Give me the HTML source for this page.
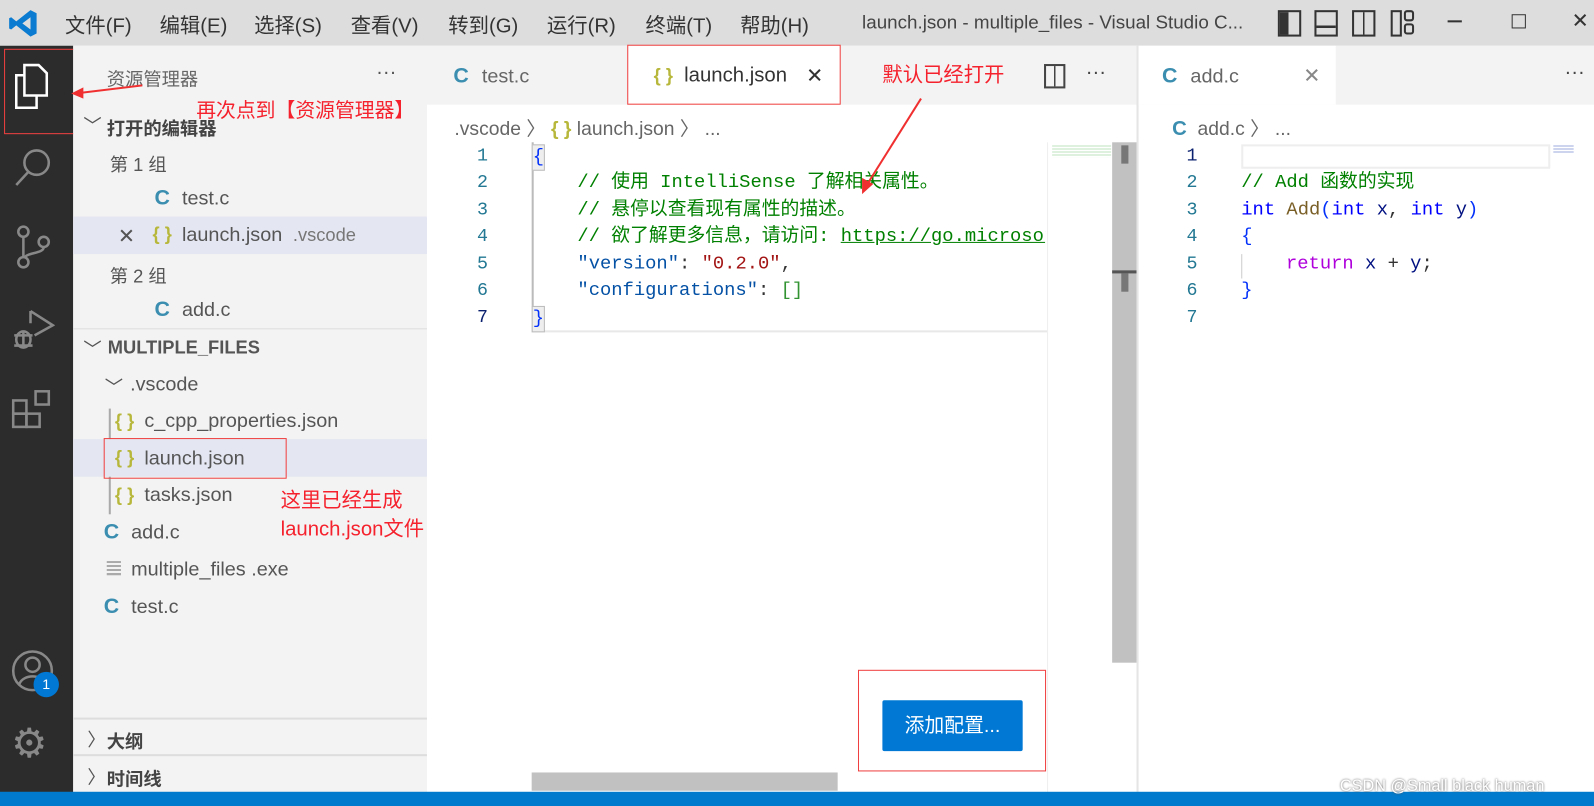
<!DOCTYPE html>
<html><head><meta charset="utf-8"><style>
html,body{margin:0;padding:0;width:1594px;height:806px;overflow:hidden;background:#fff}
#w{position:absolute;left:0;top:0;width:1568px;height:793px;transform:scale(1.01658,1.01639);transform-origin:0 0;font-family:"Liberation Sans","Noto Sans CJK SC",sans-serif;color:#333}
.a{position:absolute;white-space:nowrap}
.mono{font-family:"Liberation Mono","Noto Sans CJK SC",monospace;font-size:18.5px;line-height:24px}
.C{color:#3b8eb0;font-weight:bold}
.J{color:#b7b73b}
.red{color:#f5222d}
.box{position:absolute;border:1.5px solid #f04040}
.ln{position:absolute;width:40px;text-align:right;color:#237893;font-family:"Liberation Mono",monospace;font-size:18px;line-height:24px}
.m{position:absolute;top:9px;font-size:20px;color:#333}
</style></head><body><div id="w">
<!-- title bar -->
<div class="a" style="left:0;top:0;width:1568px;height:45px;background:#dddddd"></div>
<svg class="a" style="left:8px;top:8px" width="30" height="30" viewBox="0 0 30 30"><path d="M22 2 L28 5 V25 L22 28 L8 17 L3 21 L1 20 V10 L3 9 L8 13 Z M22 9 L14 15 L22 21 Z" fill="#0a7bd0"/></svg>
<div class="m" style="left:64px">文件(F)</div>
<div class="m" style="left:157px">编辑(E)</div>
<div class="m" style="left:250px">选择(S)</div>
<div class="m" style="left:345px">查看(V)</div>
<div class="m" style="left:441px">转到(G)</div>
<div class="m" style="left:538px">运行(R)</div>
<div class="m" style="left:635px">终端(T)</div>
<div class="m" style="left:728px">帮助(H)</div>
<div class="a" style="left:848px;top:11px;font-size:18.5px;color:#444">launch.json - multiple_files - Visual Studio C...</div>
<div class="a" style="left:1257px;top:10px;width:19px;height:22px;border:2px solid #333;background:linear-gradient(90deg,#333 45%,transparent 45%)"></div>
<div class="a" style="left:1293px;top:10px;width:19px;height:22px;border:2px solid #333;background:linear-gradient(180deg,transparent 60%,#333 60%,#333 70%,transparent 70%)"></div>
<div class="a" style="left:1330px;top:10px;width:19px;height:22px;border:2px solid #333;background:linear-gradient(90deg,transparent 45%,#333 45%,#333 55%,transparent 55%)"></div>
<div class="a" style="left:1368px;top:10px;width:7px;height:22px;border:2px solid #333"></div>
<div class="a" style="left:1381px;top:10px;width:6px;height:7px;border:2px solid #333;border-radius:3px"></div>
<div class="a" style="left:1381px;top:23px;width:6px;height:7px;border:2px solid #333;border-radius:3px"></div>
<div class="a" style="left:1424px;top:20px;width:14px;height:1.5px;background:#333"></div>
<div class="a" style="left:1487px;top:14px;width:12px;height:12px;border:1.5px solid #333"></div>
<div class="a" style="left:1546px;top:8px;font-size:20px;color:#333">✕</div>
<!-- activity bar -->
<div class="a" style="left:0;top:45px;width:72px;height:735px;background:#2c2c2c"></div>
<svg class="a" style="left:10px;top:60px" width="44" height="50" viewBox="0 0 44 50" fill="none" stroke="#fff" stroke-width="2.5"><path d="M14 4 H28 L36 12 V34 H14 Z"/><path d="M14 14 H6 V46 H26 V34"/></svg>
<svg class="a" style="left:12px;top:140px" width="44" height="50" viewBox="0 0 44 50" fill="none" stroke="#888" stroke-width="2.5"><circle cx="24" cy="20" r="12"/><path d="M16 29 L4 42"/></svg>
<svg class="a" style="left:12px;top:220px" width="44" height="50" viewBox="0 0 44 50" fill="none" stroke="#888" stroke-width="2.5"><circle cx="11" cy="8" r="5"/><circle cx="11" cy="38" r="5"/><circle cx="31" cy="18" r="5"/><path d="M11 13 V33 M31 23 C31 30 14 28 12 34"/></svg>
<svg class="a" style="left:10px;top:300px" width="44" height="50" viewBox="0 0 44 50" fill="none" stroke="#888" stroke-width="2.5"><path d="M20 6 L42 20 L24 30 M20 6 V18"/><ellipse cx="13" cy="34" rx="7" ry="8"/><path d="M4 30 H22 M4 40 H22 M13 26 V42"/></svg>
<svg class="a" style="left:10px;top:380px" width="44" height="50" viewBox="0 0 44 50" fill="none" stroke="#888" stroke-width="2.5"><rect x="3" y="14" width="13" height="13"/><rect x="3" y="27" width="13" height="13"/><rect x="16" y="27" width="13" height="13"/><rect x="25" y="5" width="13" height="13"/></svg>
<svg class="a" style="left:10px;top:638px" width="44" height="44" viewBox="0 0 44 44" fill="none" stroke="#888" stroke-width="2.5"><circle cx="22" cy="22" r="19"/><circle cx="22" cy="16" r="7"/><path d="M9 35 C13 25 31 25 35 35"/></svg>
<div class="a" style="left:33px;top:661px;width:25px;height:25px;border-radius:50%;background:#0078d4;color:#fff;font-size:14px;text-align:center;line-height:25px">1</div>
<div class="a" style="left:11px;top:712px;font-size:40px;color:#888;line-height:40px">⚙</div>
<div class="box" style="left:4px;top:48px;width:72px;height:82px"></div>
<!-- sidebar -->
<div class="a" style="left:72px;top:45px;width:348px;height:735px;background:#f3f3f3"></div>
<div class="a" style="left:105px;top:64px;font-size:18px;color:#666">资源管理器</div>
<div class="a" style="left:370px;top:60px;font-size:20px;color:#555">···</div>
<div class="a" style="left:82px;top:110px;font-size:18px;color:#555">﹀</div>
<div class="a" style="left:105px;top:113px;font-size:18px;font-weight:bold;color:#444">打开的编辑器</div>
<div class="a" style="left:108px;top:148px;font-size:18px;color:#555">第 1 组</div>
<div class="a C" style="left:152px;top:183px;font-size:21px">C</div>
<div class="a" style="left:179px;top:184px;font-size:19.5px;color:#555">test.c</div>
<div class="a" style="left:72px;top:213px;width:348px;height:37px;background:#e4e6f1"></div>
<div class="a" style="left:116px;top:220px;font-size:20px;color:#555">✕</div>
<div class="a J" style="left:150px;top:220px;font-size:18px;font-weight:bold">{ }</div>
<div class="a" style="left:179px;top:220px;font-size:19.5px;color:#555">launch.json <span style="font-size:18px;color:#777">&nbsp;.vscode</span></div>
<div class="a" style="left:108px;top:258px;font-size:18px;color:#555">第 2 组</div>
<div class="a C" style="left:152px;top:293px;font-size:21px">C</div>
<div class="a" style="left:179px;top:294px;font-size:19.5px;color:#555">add.c</div>
<div class="a" style="left:72px;top:323px;width:348px;height:1px;background:#ddd"></div>
<div class="a" style="left:82px;top:330px;font-size:18px;color:#555">﹀</div>
<div class="a" style="left:106px;top:332px;font-size:18px;font-weight:bold;color:#555">MULTIPLE_FILES</div>
<div class="a" style="left:103px;top:367px;font-size:18px;color:#555">﹀</div>
<div class="a" style="left:128px;top:367px;font-size:19.5px;color:#555">.vscode</div>
<div class="a" style="left:107px;top:402px;width:1.5px;height:104px;background:#aaa"></div>
<div class="a J" style="left:113px;top:404px;font-size:18px;font-weight:bold">{ }</div>
<div class="a" style="left:142px;top:403px;font-size:19.5px;color:#555">c_cpp_properties.json</div>
<div class="a" style="left:72px;top:432px;width:348px;height:37px;background:#e4e6f1"></div>
<div class="a J" style="left:113px;top:440px;font-size:18px;font-weight:bold">{ }</div>
<div class="a" style="left:142px;top:440px;font-size:19.5px;color:#555">launch.json</div>
<div class="box" style="left:102px;top:431px;width:178px;height:38px"></div>
<div class="a J" style="left:113px;top:477px;font-size:18px;font-weight:bold">{ }</div>
<div class="a" style="left:142px;top:476px;font-size:19.5px;color:#555">tasks.json</div>
<div class="a C" style="left:102px;top:512px;font-size:21px">C</div>
<div class="a" style="left:129px;top:513px;font-size:19.5px;color:#555">add.c</div>
<div class="a" style="left:105px;top:552px;width:14px;height:14px;background:repeating-linear-gradient(180deg,#aaa 0 2px,transparent 2px 4px)"></div>
<div class="a" style="left:129px;top:549px;font-size:19.5px;color:#555">multiple_files .exe</div>
<div class="a C" style="left:102px;top:585px;font-size:21px">C</div>
<div class="a" style="left:129px;top:586px;font-size:19.5px;color:#555">test.c</div>
<div class="a red" style="left:276px;top:479px;font-size:20px;line-height:28px">这里已经生成<br>launch.json文件</div>
<div class="a red" style="left:193px;top:92px;font-size:19.5px">再次点到【资源管理器】</div>
<svg class="a" style="left:66px;top:80px" width="80" height="20"><path d="M74 4 L8 12" stroke="#f03030" stroke-width="2"/><path d="M4 12 L16 6 L16 17 Z" fill="#f03030"/></svg>
<div class="a" style="left:72px;top:706px;width:348px;height:2px;background:#ddd"></div>
<div class="a" style="left:86px;top:714px;font-size:18px;color:#555">〉</div>
<div class="a" style="left:105px;top:716px;font-size:18px;font-weight:bold;color:#444">大纲</div>
<div class="a" style="left:72px;top:742px;width:348px;height:2px;background:#ddd"></div>
<div class="a" style="left:86px;top:751px;font-size:18px;color:#555">〉</div>
<div class="a" style="left:105px;top:753px;font-size:18px;font-weight:bold;color:#444">时间线</div>
<!-- editor group 1 -->
<div class="a" style="left:420px;top:45px;width:698px;height:58px;background:#f3f3f3"></div>
<div class="a C" style="left:446px;top:63px;font-size:21px">C</div>
<div class="a" style="left:474px;top:64px;font-size:19.5px;color:#666">test.c</div>
<div class="a" style="left:618px;top:45px;width:209px;height:58px;background:#fff"></div>
<div class="box" style="left:617px;top:44px;width:208px;height:57px"></div>
<div class="a J" style="left:643px;top:64px;font-size:18px;font-weight:bold">{ }</div>
<div class="a" style="left:673px;top:63px;font-size:20px;color:#333">launch.json</div>
<div class="a" style="left:793px;top:62px;font-size:20px;color:#333">✕</div>
<div class="a red" style="left:868px;top:57px;font-size:20px">默认已经打开</div>
<div class="a" style="left:1027px;top:63px;width:17px;height:20px;border:2px solid #444;background:linear-gradient(90deg,transparent 45%,#444 45%,#444 55%,transparent 55%)"></div>
<div class="a" style="left:1068px;top:60px;font-size:20px;color:#444">···</div>
<div class="a" style="left:447px;top:112px;font-size:19px;color:#666">.vscode 〉 <span class="J" style="font-weight:bold">{ }</span> launch.json 〉 ...</div>
<div class="ln" style="left:440px;top:142px">1</div><div class="ln" style="left:440px;top:168px">2</div><div class="ln" style="left:440px;top:195px">3</div><div class="ln" style="left:440px;top:221px">4</div><div class="ln" style="left:440px;top:248px">5</div><div class="ln" style="left:440px;top:274px">6</div><div class="ln" style="left:440px;top:301px;color:#0b216f">7</div>
<div class="a" style="left:523px;top:140px;width:505px;height:185px;border-left:2px solid #bbb;border-bottom:2px solid #e8e8e8"></div>
<div class="a mono" style="left:523px;top:142px;color:#0431fa;background:#eee;border:1px solid #bbb">{</div>
<div class="a mono" style="left:568px;top:168px;color:#008000">// 使用 IntelliSense 了解相关属性。</div>
<div class="a mono" style="left:568px;top:195px;color:#008000">// 悬停以查看现有属性的描述。</div>
<div class="a mono" style="left:568px;top:221px;color:#008000;width:460px;overflow:hidden">// 欲了解更多信息，请访问: <span style="text-decoration:underline">https://go.microsoft.com/fwlink</span></div>
<div class="a mono" style="left:568px;top:248px"><span style="color:#0451a5">"version"</span>: <span style="color:#a31515">"0.2.0"</span>,</div>
<div class="a mono" style="left:568px;top:274px"><span style="color:#0451a5">"configurations"</span>: <span style="color:#319331">[]</span></div>
<div class="a mono" style="left:523px;top:301px;color:#0431fa;background:#eee;border:1px solid #bbb">}</div>
<svg class="a" style="left:840px;top:95px" width="70" height="100"><path d="M66 2 L12 88" stroke="#f03030" stroke-width="2"/><path d="M8 96 L8 80 L19 86 Z" fill="#f03030"/></svg>
<div class="a" style="left:1030px;top:140px;width:64px;height:640px;background:#fff;border-left:1px solid #eee"></div>
<div class="a" style="left:1035px;top:143px;width:58px;height:12px;background:repeating-linear-gradient(180deg,#bde3bd 0 1px,transparent 1px 3px)"></div>
<div class="a" style="left:1094px;top:140px;width:24px;height:512px;background:#c1c1c1"></div>
<div class="a" style="left:1103px;top:143px;width:7px;height:18px;background:#777"></div>
<div class="a" style="left:1094px;top:266px;width:24px;height:3px;background:#555"></div>
<div class="a" style="left:1103px;top:269px;width:7px;height:18px;background:#777"></div>
<div class="a" style="left:523px;top:760px;width:301px;height:18px;background:#c1c1c1"></div>
<div class="box" style="left:844px;top:659px;width:183px;height:98px"></div>
<div class="a" style="left:868px;top:689px;width:138px;height:50px;background:#0078d4;color:#fff;font-size:19.5px;text-align:center;line-height:50px;border-radius:2px">添加配置...</div>
<!-- group 2 -->
<div class="a" style="left:1118px;top:45px;width:2px;height:735px;background:#e5e5e5"></div>
<div class="a" style="left:1120px;top:45px;width:448px;height:58px;background:#f3f3f3"></div>
<div class="a" style="left:1120px;top:45px;width:194px;height:58px;background:#fff"></div>
<div class="a C" style="left:1143px;top:63px;font-size:21px">C</div>
<div class="a" style="left:1171px;top:64px;font-size:19.5px;color:#666">add.c</div>
<div class="a" style="left:1282px;top:62px;font-size:20px;color:#888">✕</div>
<div class="a" style="left:1539px;top:60px;font-size:20px;color:#444">···</div>
<div class="a" style="left:1153px;top:112px;font-size:19px;color:#666"><span class="C" style="font-size:20px">C</span> &nbsp;add.c 〉 ...</div>
<div class="ln" style="left:1138px;top:142px;color:#0b216f">1</div><div class="ln" style="left:1138px;top:168px">2</div><div class="ln" style="left:1138px;top:195px">3</div><div class="ln" style="left:1138px;top:221px">4</div><div class="ln" style="left:1138px;top:248px">5</div><div class="ln" style="left:1138px;top:274px">6</div><div class="ln" style="left:1138px;top:301px">7</div>
<div class="a" style="left:1221px;top:142px;width:300px;height:20px;border:2px solid #eee"></div>
<div class="a" style="left:1528px;top:143px;width:20px;height:8px;background:repeating-linear-gradient(180deg,#9ad 0 1px,transparent 1px 3px)"></div>
<div class="a mono" style="left:1221px;top:168px;color:#008000">// Add 函数的实现</div>
<div class="a mono" style="left:1221px;top:195px"><span style="color:#0000ff">int</span> <span style="color:#795e26">Add</span><span style="color:#0431fa">(</span><span style="color:#0000ff">int</span> <span style="color:#001080">x</span>, <span style="color:#0000ff">int</span> <span style="color:#001080">y</span><span style="color:#0431fa">)</span></div>
<div class="a mono" style="left:1221px;top:221px;color:#0431fa">{</div>
<div class="a" style="left:1221px;top:250px;width:1px;height:24px;background:#ccc"></div>
<div class="a mono" style="left:1265px;top:248px"><span style="color:#af00db">return</span> <span style="color:#001080">x</span> + <span style="color:#001080">y</span>;</div>
<div class="a mono" style="left:1221px;top:274px;color:#0431fa">}</div>
<!-- status -->
<div class="a" style="left:0;top:779px;width:1568px;height:14px;background:#007acc"></div>
<div class="a" style="left:1318px;top:765px;font-size:16px;color:#fff;text-shadow:0 0 2px #555">CSDN @Small black human</div>
</div></body></html>
